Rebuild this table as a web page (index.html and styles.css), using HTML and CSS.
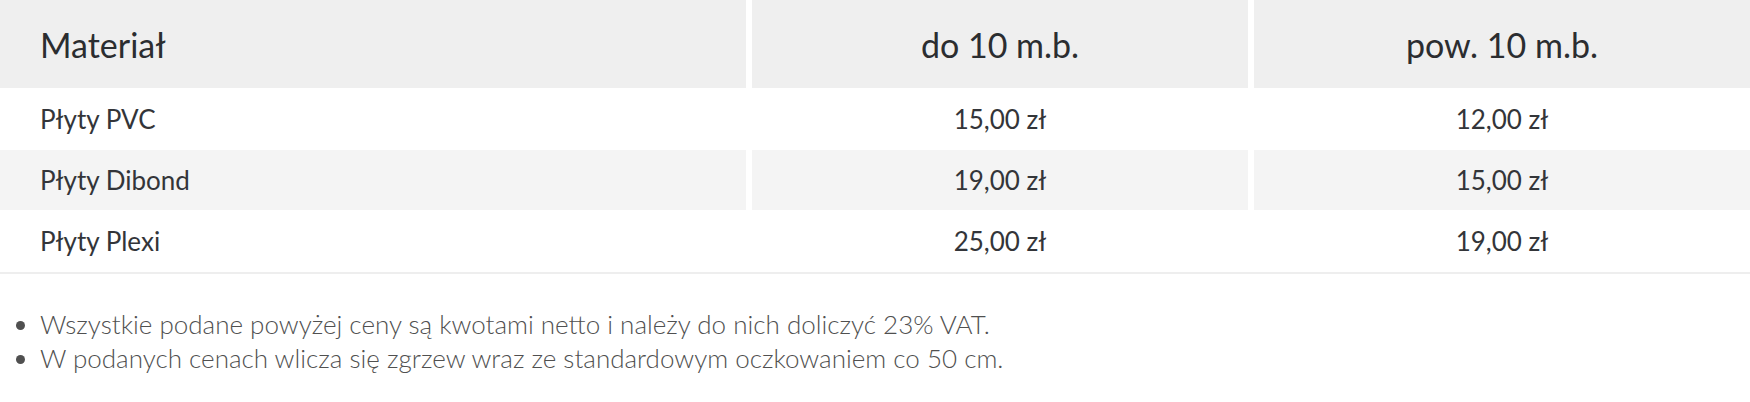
FILE: index.html
```html
<!DOCTYPE html>
<html lang="pl">
<head>
<meta charset="utf-8">
<title>Cennik</title>
<link rel="stylesheet" href="styles.css">
</head>
<body>
<div class="page">
  <div class="table-wrap">
    <table class="prices">
      <colgroup>
        <col class="col-name">
        <col class="col-val">
        <col class="col-val">
      </colgroup>
      <thead>
        <tr>
          <th class="name">Materiał</th>
          <th>do 10 m.b.</th>
          <th>pow. 10 m.b.</th>
        </tr>
      </thead>
      <tbody>
        <tr>
          <td class="name">Płyty PVC</td>
          <td>15,00 zł</td>
          <td>12,00 zł</td>
        </tr>
        <tr class="alt">
          <td class="name">Płyty Dibond</td>
          <td>19,00 zł</td>
          <td>15,00 zł</td>
        </tr>
        <tr>
          <td class="name">Płyty Plexi</td>
          <td>25,00 zł</td>
          <td>19,00 zł</td>
        </tr>
      </tbody>
    </table>
  </div>
  <ul class="notes">
    <li>Wszystkie podane powyżej ceny są kwotami netto i należy do nich doliczyć 23% VAT.</li>
    <li>W podanych cenach wlicza się zgrzew wraz ze standardowym oczkowaniem co 50 cm.</li>
  </ul>
</div>
</body>
</html>
```

FILE: styles.css
```css
html, body {
  margin: 0;
  padding: 0;
  background: #ffffff;
}

body {
  font-family: Lato, "Open Sans", sans-serif;
  color: #333;
}

.page {
  width: 1750px;
}

.table-wrap {
  border-bottom: 2px solid #eeeeee;
}

.prices {
  width: 1750px;
  table-layout: fixed;
  border-collapse: separate;
  border-spacing: 0;
}

.col-name {
  width: 746px;
}

.col-val {
  width: 502px;
}

.prices th,
.prices td {
  padding: 0;
  text-align: center;
  vertical-align: middle;
  border-left: 6px solid #fff;
}

.prices th.name,
.prices td.name {
  text-align: left;
  padding-left: 40px;
  border-left: 0;
}

.prices th {
  height: 88px;
  background: #efefef;
  font-size: 34px;
  font-weight: 400;
  color: #2b2d30;
}

.prices td {
  height: 59.33px;
  border-top: 1px solid #fff;
  border-bottom: 1px solid #fff;
  font-size: 26px;
  line-height: 30px;
  color: #333539;
}

.prices tr.alt td {
  background: #f4f4f4;
}

.notes {
  margin: 33px 0 0 0;
  padding: 0 0 0 40px;
  font-size: 26px;
  font-weight: 300;
  line-height: 34px;
  color: #505050;
}
```
